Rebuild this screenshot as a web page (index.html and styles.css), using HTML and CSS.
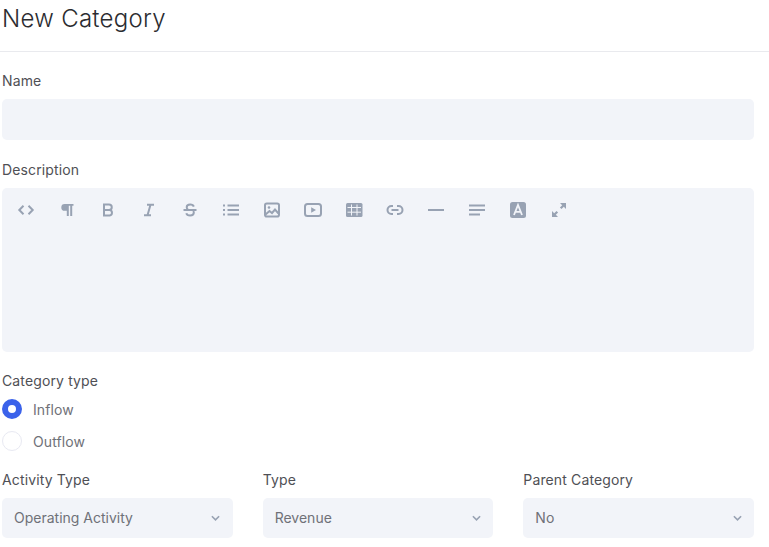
FILE: index.html
```html
<!DOCTYPE html>
<html lang="en">
<head>
<meta charset="utf-8">
<title>New Category</title>
<link rel="stylesheet" href="styles.css">
</head>
<body>
<header class="page-head"><h1>New Category</h1></header>
<form class="form">
  <div class="field">
    <label class="label">Name</label>
    <div class="input"></div>
  </div>
  <div class="field field-desc">
    <label class="label">Description</label>
    <div class="editor">
      <div class="toolbar">
        <span class="tool"><svg viewBox="0 0 18 18"><path class="s" d="M6.500 4.800 2.300 9l4.200 4.200M11.500 4.800 15.700 9l-4.200 4.200"/></svg></span>
        <span class="tool"><svg viewBox="0 0 18 18"><path class="f" d="M6.700 3H15.500v1.800h-1.300V15h-2V4.800h-1.400V15h-2V9.800H6.700a3.400 3.400 0 0 1 0-6.800Z"/></svg></span>
        <span class="tool"><svg viewBox="0 0 18 18"><path class="s" d="M5 3.500h5a2.700 2.700 0 0 1 0 5.500H5ZM5 9h5.700a2.800 2.800 0 0 1 0 5.500H5Z"/></svg></span>
        <span class="tool"><svg viewBox="0 0 18 18"><path class="s" d="M7 3.800h7M4 14.200h7M10.500 3.800l-3 10.400"/></svg></span>
        <span class="tool"><svg viewBox="0 0 18 18"><path class="s" d="M2.500 9h13M12.800 5.600C12.300 4.200 10.900 3.600 9.200 3.600c-2 0-3.500 1-3.500 2.700 0 1 .5 1.900 1.500 2.700M5.300 12.200c.4 1.500 1.900 2.300 3.800 2.300 2.100 0 3.700-1 3.700-2.700 0-.7-.2-1.300-.6-1.800"/></svg></span>
        <span class="tool"><svg viewBox="0 0 18 18"><path class="s" d="M5.500 4.500H17M5.500 9H17M5.500 13.500H17M1 4.500h2M1 9h2M1 13.500h2"/></svg></span>
        <span class="tool"><svg viewBox="0 0 18 18"><rect class="s" x="2" y="2.500" width="14" height="13" rx="1.800"/><circle class="f" cx="6" cy="6.500" r="1.300"/><path class="s" d="m2.500 13.500 4-3.500 2.500 2 3-3.500 3.500 4"/></svg></span>
        <span class="tool"><svg viewBox="0 0 18 18"><rect class="s" x="1" y="3" width="16" height="12" rx="2.500"/><path class="f" d="M7.200 6.200v5.600L12 9Z"/></svg></span>
        <span class="tool"><svg viewBox="0 0 18 18"><rect class="f" x="1" y="2" width="16.500" height="14" rx="1.500"/><path class="g" d="M2.500 6.500h13.500M2.500 11.200h13.500M6.500 3.500v11M12 3.500v11"/></svg></span>
        <span class="tool"><svg viewBox="0 0 18 18"><path class="s" d="M7 5H5.500a4 4 0 0 0 0 8H7M11 5h1.500a4 4 0 0 1 0 8H11M5.500 9h7"/></svg></span>
        <span class="tool"><svg viewBox="0 0 18 18"><path class="s" d="M1 9h16"/></svg></span>
        <span class="tool"><svg viewBox="0 0 18 18"><path class="s" d="M1 4.500h16M1 9h16M1 13.500h11"/></svg></span>
        <span class="tool"><svg viewBox="0 0 18 18"><rect class="f" x="1" y="1" width="16" height="16" rx="2.500"/><path class="c" d="m5 14 4-10 4 10M6.300 10.800h5.400"/></svg></span>
        <span class="tool"><svg viewBox="0 0 18 18"><path class="f" d="M10 2h6v6l-2.200-2.200-2.300 2.300-1.600-1.600 2.300-2.300ZM8 16H2v-6l2.200 2.200 2.300-2.300 1.600 1.600-2.300 2.300Z"/></svg></span>
      </div>
    </div>
  </div>
  <div class="field-type">
    <label class="label">Category type</label>
    <div class="radio-row"><span class="radio on"></span><span class="radio-text">Inflow</span></div>
    <div class="radio-row"><span class="radio"></span><span class="radio-text">Outflow</span></div>
  </div>
  <div class="selects">
    <div class="field">
      <label class="label">Activity Type</label>
      <div class="select"><span>Operating Activity</span><svg class="chev" viewBox="0 0 10 6"><path d="M1 1l4 4 4-4"/></svg></div>
    </div>
    <div class="field">
      <label class="label">Type</label>
      <div class="select"><span>Revenue</span><svg class="chev" viewBox="0 0 10 6"><path d="M1 1l4 4 4-4"/></svg></div>
    </div>
    <div class="field">
      <label class="label">Parent Category</label>
      <div class="select"><span>No</span><svg class="chev" viewBox="0 0 10 6"><path d="M1 1l4 4 4-4"/></svg></div>
    </div>
  </div>
</form>
</body>
</html>
```
FILE: styles.css
```css
* { box-sizing: border-box; }
html, body { margin: 0; padding: 0; background: #fff; }
body {
  width: 769px;
  height: 547px;
  overflow: hidden;
  font-family: Inter, "Liberation Sans", sans-serif;
  color: #4b4b4f;
}
.page-head {
  height: 52px;
  border-bottom: 1px solid #e9eaee;
  padding: 4px 2px 0;
}
.page-head h1 {
  margin: 0;
  font-size: 24px;
  line-height: 30px;
  font-weight: 300;
  letter-spacing: .28px;
  color: #2b2c30;
}
.form { padding: 19px 15px 0 2px; }
.label {
  display: block;
  font-size: 14px;
  line-height: 20px;
  letter-spacing: .13px;
  color: #4f5055;
}
.field .label { margin-bottom: 8px; }
.input {
  height: 41px;
  background: #f2f4f9;
  border-radius: 5px;
}
.field-desc { margin-top: 20px; }
.editor {
  height: 164px;
  background: #f2f4f9;
  border-radius: 5px;
  padding: 13px 15px;
}
.toolbar { display: flex; gap: 23px; }
.tool { width: 18px; height: 18px; display: block; }
.tool svg { display: block; width: 18px; height: 18px; }
.s { fill: none; stroke: #98a2b3; stroke-width: 2; }
.f { fill: #98a2b3; }
.c { fill: none; stroke: #f2f4f9; stroke-width: 1.800; }
.g { fill: none; stroke: #f2f4f9; stroke-width: 1; }
.field-type { margin-top: 19px; }
.radio-row {
  display: flex;
  align-items: center;
  gap: 11px;
  height: 22px;
  margin-top: 10px;
}
.field-type .label + .radio-row { margin-top: 7px; }
.radio {
  width: 20px;
  height: 20px;
  border-radius: 50%;
  border: 1px solid #e8e9f2;
  background: #fff;
}
.radio.on { border: 6px solid #3b62ea; }
.radio-text { font-size: 14px; letter-spacing: .1px; color: #6f7178; }
.selects {
  display: grid;
  grid-template-columns: repeat(3, 1fr);
  gap: 30px;
  margin-top: 18px;
}
.select {
  height: 40px;
  background: #f2f4f9;
  border-radius: 5px;
  padding: 0 12.5px 1px 12px;
  display: flex;
  align-items: center;
  justify-content: space-between;
  font-size: 14px;
  color: #6f7178;
}
.chev { width: 9px; height: 6px; }
.chev path { fill: none; stroke: #98a2b3; stroke-width: 1.800; }
```
